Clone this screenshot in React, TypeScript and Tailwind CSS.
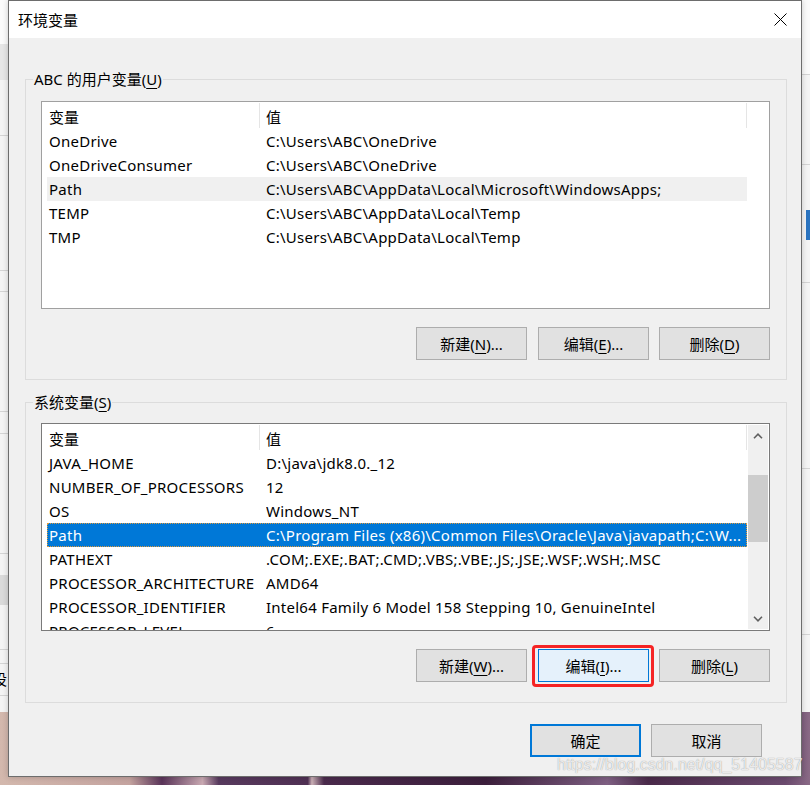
import type { ReactNode } from "react";

type Row = [string, string];

const userVars: Row[] = [
  ["OneDrive", "C:\\Users\\ABC\\OneDrive"],
  ["OneDriveConsumer", "C:\\Users\\ABC\\OneDrive"],
  ["Path", "C:\\Users\\ABC\\AppData\\Local\\Microsoft\\WindowsApps;"],
  ["TEMP", "C:\\Users\\ABC\\AppData\\Local\\Temp"],
  ["TMP", "C:\\Users\\ABC\\AppData\\Local\\Temp"],
];

const systemVars: Row[] = [
  ["JAVA_HOME", "D:\\java\\jdk8.0._12"],
  ["NUMBER_OF_PROCESSORS", "12"],
  ["OS", "Windows_NT"],
  ["Path", "C:\\Program Files (x86)\\Common Files\\Oracle\\Java\\javapath;C:\\W..."],
  ["PATHEXT", ".COM;.EXE;.BAT;.CMD;.VBS;.VBE;.JS;.JSE;.WSF;.WSH;.MSC"],
  ["PROCESSOR_ARCHITECTURE", "AMD64"],
  ["PROCESSOR_IDENTIFIER", "Intel64 Family 6 Model 158 Stepping 10, GenuineIntel"],
  ["PROCESSOR_LEVEL", "6"],
];

// thin separators of the app window peeking out behind the dialog
const leftLines = [135, 270, 291, 411, 433, 553, 649, 663, 695];
const rightLines = [74, 164, 282, 468, 634];

function Key({ children }: { children: ReactNode }) {
  return <span className="underline decoration-1 underline-offset-[3px]">{children}</span>;
}

type BtnKind = "normal" | "hover" | "default";

function Button({ children, kind = "normal" }: { children: ReactNode; kind?: BtnKind }) {
  const look =
    kind === "hover"
      ? "border border-[#0078d7] bg-[#e5f1fb]"
      : kind === "default"
        ? "border-2 border-[#0078d7] bg-[#e1e1e1]"
        : "border border-[#adadad] bg-[#e1e1e1]";
  return (
    <button className={`flex h-[33px] w-[111px] items-center justify-center leading-[20px] ${look}`}>
      {children}
    </button>
  );
}

function Chevron({ down = false }: { down?: boolean }) {
  return (
    <svg width="10" height="6" viewBox="0 0 10 6">
      <path
        d={down ? "M1 0.8 5 4.8 9 0.8" : "M1 5.2 5 1.2 9 5.2"}
        fill="none"
        stroke="#606060"
        strokeWidth="1.6"
      />
    </svg>
  );
}

function ScrollBar() {
  return (
    <div className="my-px mr-px flex w-[20px] flex-col bg-[#f0f0f0]">
      <div className="flex h-[21px] items-center justify-center">
        <Chevron />
      </div>
      <div className="flex-1">
        <div className="mt-[29px] h-[67px] bg-[#cdcdcd]" />
      </div>
      <div className="flex h-[21px] items-center justify-center">
        <Chevron down />
      </div>
    </div>
  );
}

type RowState = "plain" | "inactive" | "selected";

function VarRow({ name, value, state }: { name: string; value: string; state: RowState }) {
  const look =
    state === "selected"
      ? "bg-[#0078d7] text-white outline-1 outline-dotted -outline-offset-1 outline-[#e09a3c]"
      : state === "inactive"
        ? "bg-[#f0f0f0]"
        : "";
  return (
    <div
      className={`grid h-[24px] w-[700px] grid-cols-[219px_481px] items-center whitespace-nowrap leading-[20px] tracking-[0.25px] ${look}`}
    >
      <div className="overflow-hidden pl-[2px]">{name}</div>
      <div className="overflow-hidden">{value}</div>
    </div>
  );
}

function VarList({
  rows,
  grayRow = -1,
  blueRow = -1,
  scroll = false,
}: {
  rows: Row[];
  grayRow?: number;
  blueRow?: number;
  scroll?: boolean;
}) {
  return (
    <div
      className={`flex h-[208px] w-[729px] border bg-white ${
        scroll ? "border-[#7a7a7a]" : "border-[#a0a0a0]"
      }`}
    >
      <div className="min-w-0 flex-1 overflow-hidden">
        <div className="flex h-[27px] whitespace-nowrap leading-[20px]">
          <div className="w-[217px] pl-[7px] pt-[5px]">变量</div>
          <div className="mt-px h-[25px] w-px bg-[#e5e5e5]" />
          <div className="w-[486px] pl-[6px] pt-[5px]">值</div>
          <div className="mt-px h-[25px] w-px bg-[#e5e5e5]" />
        </div>
        <div className="pl-[5px]">
          {rows.map(([name, value], i) => (
            <VarRow
              key={name + i}
              name={name}
              value={value}
              state={i === blueRow ? "selected" : i === grayRow ? "inactive" : "plain"}
            />
          ))}
        </div>
      </div>
      {scroll && <ScrollBar />}
    </div>
  );
}

function Group({ label, className, children }: { label: ReactNode; className: string; children: ReactNode }) {
  return (
    <div className={`relative h-[301px] w-[762px] border border-[#dcdcdc] px-[15px] ${className}`}>
      <span className="absolute -top-[11px] left-[7px] bg-[#f0f0f0] px-px leading-[20px]">{label}</span>
      {children}
    </div>
  );
}

export default function App() {
  return (
    <div className="relative h-[785px] w-[810px] overflow-hidden bg-[#f4f4f4] font-['Noto_Sans','Noto_Sans_CJK_SC',sans-serif] text-[15px] text-black">
      {/* desktop behind the dialog */}
      <div className="absolute left-0 top-0 h-[44px] w-[8px] bg-[#fbfbfb]" />
      <div className="absolute left-0 top-[44px] h-[36px] w-[8px] bg-[#e6e6e6]" />
      <div className="absolute left-0 top-[575px] h-[30px] w-[8px] bg-[#dadada]" />
      {leftLines.map((y) => (
        <div key={y} className="absolute left-0 h-px w-[8px] bg-[#d4d4d4]" style={{ top: y }} />
      ))}
      <span className="absolute -left-[8px] top-[669px] leading-[20px]">设</span>
      <div className="absolute right-0 top-0 h-[74px] w-[9px] bg-[#fafafa]" />
      {rightLines.map((y) => (
        <div key={y} className="absolute right-0 h-px w-[9px] bg-[#d4d4d4]" style={{ top: y }} />
      ))}
      <div className="absolute right-0 top-[210px] h-[30px] w-[4px] bg-[#2b74c0]" />
      <div className="absolute inset-x-0 bottom-0 top-[712px] bg-[linear-gradient(90deg,#d3b8ad_0%,#c4a39f_16%,#5a3459_20%,#c9a9b2_25%,#583a5e_27%,#4f3053_38%,#cbb0b6_38.5%,#4a2a4c_40%,#3c1f3c_60%,#7e5f82_75%,#4a2a4a_80%,#6b4a6e_97%,#8a6a86_100%)]" />

      <div className="relative ml-[8px] h-[777px] w-[794px] border border-[#6d6d6d] bg-[#f0f0f0] shadow-[0_0_6px_rgba(0,0,0,0.2)]">
        <div className="flex h-[37px] items-center justify-between bg-white pl-[9px] leading-[20px]">
          <span>环境变量</span>
          <div className="flex h-full w-[42px] items-center justify-center">
            <svg width="13" height="13" viewBox="0 0 13 13">
              <path d="M0.5 0.5 12.5 12.5M12.5 0.5 0.5 12.5" stroke="#000" strokeWidth="1" />
            </svg>
          </div>
        </div>

        <div className="flex flex-col pl-[16px] pr-[14px] pt-[41px]">
          <Group
            className="pt-[21px]"
            label={
              <>
                ABC 的用户变量(<Key>U</Key>)
              </>
            }
          >
            <VarList rows={userVars} grayRow={2} />
            <div className="mt-[18px] flex justify-end gap-[10px] pr-px">
              <Button>
                新建(<Key>N</Key>)...
              </Button>
              <div className="ml-px">
                <Button>
                  编辑(<Key>E</Key>)...
                </Button>
              </div>
              <Button>
                删除(<Key>D</Key>)
              </Button>
            </div>
          </Group>

          <Group
            className="mt-[22px] pt-[20px]"
            label={
              <>
                系统变量(<Key>S</Key>)
              </>
            }
          >
            <VarList rows={systemVars} blueRow={3} scroll />
            <div className="mt-[18px] flex justify-end gap-[10px] pr-px">
              <Button>
                新建(<Key>W</Key>)...
              </Button>
              <div className="relative ml-px">
                <Button kind="hover">
                  编辑(<Key>I</Key>)...
                </Button>
                {/* red marker drawn around the edit button */}
                <div className="pointer-events-none absolute -bottom-[5px] -left-[6px] -right-[5px] -top-[4px] rounded-[4px] border-[3px] border-[#f52424]" />
              </div>
              <Button>
                删除(<Key>L</Key>)
              </Button>
            </div>
          </Group>

          <div className="mt-[21px] flex justify-end gap-[10px] pr-[25px]">
            <Button kind="default">确定</Button>
            <Button>取消</Button>
          </div>
        </div>
      </div>

      <span className="pointer-events-none absolute left-[557px] top-[755px] z-10 whitespace-nowrap font-['Liberation_Sans',sans-serif] text-[16px] leading-[20px] text-white/80 [text-shadow:0_0_1px_rgba(0,0,0,0.45)]">
        https://blog.csdn.net/qq_51405587
      </span>
    </div>
  );
}
